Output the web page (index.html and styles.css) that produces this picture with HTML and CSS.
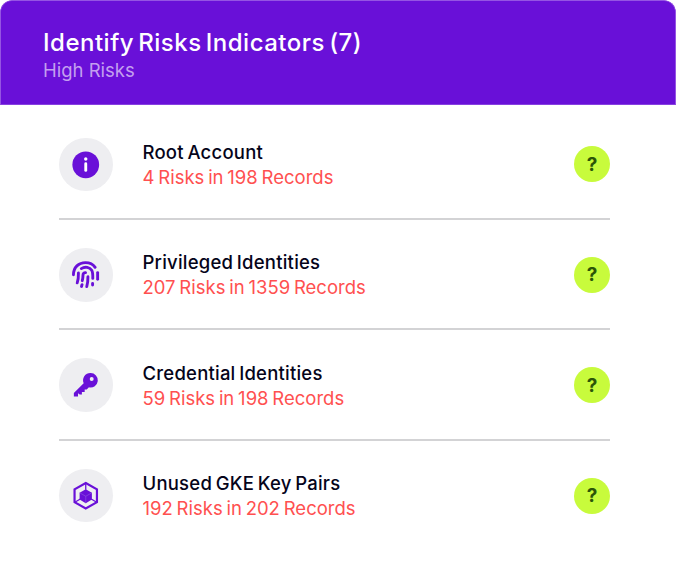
FILE: index.html
```html
<!DOCTYPE html>
<html lang="en">
<head>
  <meta charset="UTF-8" />
  <meta name="viewport" content="width=device-width, initial-scale=1.0"/>
  <title>Identify Risks Indicators</title>
  <link rel="stylesheet" href="styles.css">
</head>
<body>
  <div class="card">
    <div class="card-header">
      <h1>Identify Risks Indicators (7)</h1>
      <p>High Risks</p>
    </div>

    <ul class="risk-list">
      <li class="risk">
        <div class="risk-icon">
          <svg viewBox="0 0 54 54">
            <circle cx="27" cy="27" r="13.5" fill="#6910d8"/>
            <circle cx="27" cy="21.2" r="1.7" fill="#fff"/>
            <path d="M27 26v6.7" stroke="#fff" stroke-width="2.9" stroke-linecap="round"/>
          </svg>
        </div>
        <div class="risk-text">
          <h2>Root Account</h2>
          <p>4 Risks in 198 Records</p>
        </div>
        <button class="help">?</button>
      </li>

      <li class="risk">
        <div class="risk-icon">
          <svg viewBox="0 0 54 54" fill="none" stroke="#6910d8" stroke-width="2.9" stroke-linecap="round">
            <path d="M14.6 27c0-7.500 5.200-12.300 12.200-12.300 4.200 0 7.500 1.600 9.700 4.800"/>
            <path d="M39 24.800v6.700"/>
            <path d="M22.500 20.800c4-2.400 8.500-1.300 10.500 1.700 1.200 1.900 1.200 4.500 1.100 8.200"/>
            <path d="M33.900 35.800v1.500"/>
            <path d="M19.600 25.200c.1 4-.1 7-1.200 10"/>
            <path d="M23.500 33c.6-2.500.7-4 .7-5.500 0-1.900 1-2.800 2.600-2.700"/>
            <path d="M23.300 37l-.6 1.800"/>
            <path d="M29.200 29c.1 3.800-.3 6.800-1.200 10"/>
          </svg>
        </div>
        <div class="risk-text">
          <h2>Privileged Identities</h2>
          <p>207 Risks in 1359 Records</p>
        </div>
        <button class="help">?</button>
      </li>

      <li class="risk">
        <div class="risk-icon">
          <svg viewBox="0 0 54 54">
            <path fill="#6910d8" fill-rule="evenodd" d="M31.800 15.200a7.300 7.300 0 1 1-1.600 14.400L28 31.900h-2.100v2.500h-2.800v2.500h-2.200l-1.700-1.200v3.200h-4.200v-3.500l9.900-9.900a7.300 7.300 0 0 1 6.900-10.300zM33 19.100a2 2 0 1 0 0 4 2 2 0 0 0 0-4z"/>
          </svg>
        </div>
        <div class="risk-text">
          <h2>Credential Identities</h2>
          <p>59 Risks in 198 Records</p>
        </div>
        <button class="help">?</button>
      </li>

      <li class="risk">
        <div class="risk-icon">
          <svg viewBox="0 0 54 54">
            <path d="M27 14.200l11.300 6.400v12.800L27 39.800l-11.300-6.400V20.600z" fill="none" stroke="#6910d8" stroke-width="2.200"/>
            <path d="M27 14v7M16 33.500l5.500-3.200M38 33.500l-5.500-3.200" stroke="#6910d8" stroke-width="1.300"/>
            <path d="M27 20.500l6.200 3.400v7L27 34.500l-6.200-3.600v-7z" fill="#6910d8"/>
            <path d="M20.800 24L27 27.500l6.200-3.500M27 27.500v7" fill="none" stroke="#9259e2" stroke-width=".6"/>
          </svg>
        </div>
        <div class="risk-text">
          <h2>Unused GKE Key Pairs</h2>
          <p>192 Risks in 202 Records</p>
        </div>
        <button class="help">?</button>
      </li>
    </ul>
  </div>
</body>
</html>
```

FILE: styles.css
```css
* {
  box-sizing: border-box;
}
body {
  margin: 0;
  font-family: Inter, sans-serif;
  background: #fff;
}
h1, h2, p, ul {
  margin: 0;
  padding: 0;
}
h1, h2 {
  font-weight: 500;
}
.card {
  width: 676px;
  height: 575px;
  overflow: hidden;
  border-radius: 12px 12px 0 0;
}
.card-header {
  height: 105px;
  padding: 27px 42px 0;
  color: white;
  background: #6910d8;
  border: 1px solid #9554e3;
  border-bottom-color: #8740e0;
  border-radius: 12px 12px 0 0;
}
.card-header h1 {
  font-size: 24px;
  line-height: 29px;
  letter-spacing: 0.5px;
  word-spacing: -2.7px;
}
.card-header p {
  font-size: 18.5px;
  line-height: 26px;
  color: #c39fef;
}
.risk-list {
  list-style: none;
  margin: 4.6px 66px 0 59px;
}
.risk {
  display: flex;
  align-items: center;
  height: 110.4px;
  padding-top: 1.2px;
  border-bottom: 2px solid #d3d3d5;
}
.risk:last-child {
  border-bottom-color: transparent;
}
.risk-icon {
  width: 53.5px;
  height: 53.5px;
  border-radius: 50%;
  background: #eeeef1;
}
.risk-icon svg {
  display: block;
}
.risk-text {
  flex: 1;
  padding-top: 1px;
  margin-left: 30px;
}
.risk-text h2 {
  font-size: 18.5px;
  line-height: 25px;
  letter-spacing: 0.22px;
  word-spacing: -1.5px;
  color: #05041a;
}
.risk-text p {
  font-size: 18.5px;
  line-height: 25px;
  word-spacing: -1.4px;
  color: #ff5050;
}
.help {
  width: 36px;
  height: 36px;
  padding: 0;
  border: none;
  border-radius: 50%;
  background: #c8fb3c;
  color: #2c5508;
  font: 700 19px Inter, sans-serif;
}
```
